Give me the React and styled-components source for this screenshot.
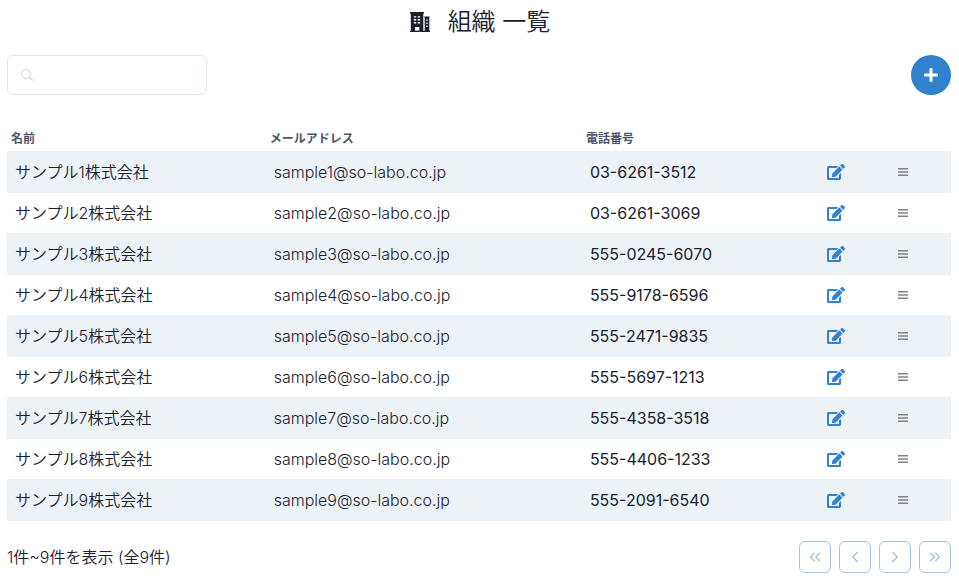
import React, { useState } from "react";
import styled, { createGlobalStyle } from "styled-components";
import { FaEdit, FaPlus } from "react-icons/fa";
import {
  FiChevronLeft,
  FiChevronRight,
  FiChevronsLeft,
  FiChevronsRight
} from "react-icons/fi";

const GlobalStyle = createGlobalStyle`
  *, *::before, *::after {
    box-sizing: border-box;
  }
  body {
    margin: 0;
    background: #fff;
    color: #1a202c;
    font-family: Inter, "Noto Sans CJK JP", sans-serif;
    font-size: 16px;
    font-weight: 350;
    line-height: 24px;
  }
  button, input {
    font: inherit;
    color: inherit;
  }
  svg {
    display: block;
  }
`;

const Page = styled.main`
  padding: 4px 8px 11px 7px;
`;

const Title = styled.h1`
  display: flex;
  align-items: center;
  justify-content: center;
  gap: 18px;
  margin: 0;
  padding-left: 2px;
  font-size: 24px;
  font-weight: 350;
  line-height: 35px;
`;

const Toolbar = styled.div`
  display: flex;
  align-items: center;
  justify-content: space-between;
  margin-top: 16px;
`;

const SearchBox = styled.label`
  display: flex;
  align-items: center;
  gap: 8px;
  width: 200px;
  height: 40px;
  padding: 0 12px;
  border: 1px solid #e2e8f0;
  border-radius: 6px;
  color: #cbd5e0;
`;

const SearchInput = styled.input`
  flex: 1;
  min-width: 0;
  padding: 0;
  border: 0;
  outline: 0;
  background: none;
  color: #1a202c;
`;

const AddButton = styled.button`
  display: flex;
  align-items: center;
  justify-content: center;
  width: 40px;
  height: 40px;
  padding: 0;
  border: 0;
  border-radius: 50%;
  background: #3182ce;
  color: #fff;
  cursor: pointer;
`;

const Table = styled.table`
  width: 100%;
  margin-top: 32px;
  border-collapse: separate;
  border-spacing: 0;
  table-layout: fixed;
`;

const HeadCell = styled.th`
  width: ${props => props.$width};
  height: 25px;
  padding: 4px;
  border-bottom: 1px solid #edf2f7;
  color: #4a5568;
  font-size: 12px;
  font-weight: 700;
  line-height: 16px;
  text-align: left;
`;

const Row = styled.tr`
  &:nth-child(odd) {
    background: #edf2f7;
  }
`;

const Cell = styled.td`
  padding: 8px;
  border-bottom: 1px solid #edf2f7;
  white-space: nowrap;
`;

const TelCell = styled(Cell)`
  font-weight: 400;
`;

const IconButton = styled.button`
  display: flex;
  align-items: center;
  height: 24px;
  padding: 0;
  border: 0;
  background: none;
  color: ${props => props.$color};
  cursor: pointer;
`;

const Footer = styled.footer`
  display: flex;
  align-items: center;
  justify-content: space-between;
  margin-top: 20px;
`;

const Pager = styled.nav`
  display: flex;
  gap: 8px;
`;

const PageButton = styled.button`
  display: flex;
  align-items: center;
  justify-content: center;
  width: 32px;
  height: 32px;
  padding: 0;
  border: 1px solid #3182ce;
  border-radius: 6px;
  background: none;
  color: #2b6cb0;
  &:disabled {
    border-color: #a9c4e0;
    color: #a9c4e0;
  }
`;

const BuildingIcon = () => (
  <svg width="20" height="20" viewBox="0 0 20 20" aria-hidden="true">
    <path
      fill="currentColor"
      fillRule="evenodd"
      d="M0 0h14v1.4h-.7V18.7h1.4V5.4h-.3V4.6h5.2v.8h-.3V18.7h.7V20H9.3v-5H5v5H0v-1.3h.8V1.4H0zM3.8 4.2v1.4h2.4V4.2zM7.7 4.2v1.4h2.4V4.2zM3.8 7.1v1.4h2.4V7.1zM7.7 7.1v1.4h2.4V7.1zM3.8 10v1.4h2.4V10zM7.7 10v1.4h2.4V10zM16.3 7.6v1.4h1.3V7.6zM16.3 10.6v1.4h1.3v-1.4zM16.3 13.6v1.4h1.3v-1.4z"
    />
    <path fill="currentColor" d="M5 18.6h4.5V20H5z" />
  </svg>
);

const SearchIcon = () => (
  <svg
    width="14"
    height="14"
    viewBox="0 0 14 14"
    fill="none"
    stroke="currentColor"
    aria-hidden="true"
  >
    <circle cx="6" cy="6" r="4.5" />
    <path d="M9.3 9.3l3.4 3.2" strokeWidth="1.4" />
  </svg>
);

const MenuIcon = () => (
  <svg width="10" height="10" viewBox="0 0 10 10" aria-hidden="true">
    <path
      fill="currentColor"
      d="M0 1h10v1.6H0zM0 4.2h10v1.6H0zM0 7.4h10V9H0z"
    />
  </svg>
);

const organizations = [
  "03-6261-3512",
  "03-6261-3069",
  "555-0245-6070",
  "555-9178-6596",
  "555-2471-9835",
  "555-5697-1213",
  "555-4358-3518",
  "555-4406-1233",
  "555-2091-6540"
].map((tel, i) => ({
  id: i + 1,
  name: `サンプル${i + 1}株式会社`,
  email: `sample${i + 1}@so-labo.co.jp`,
  tel
}));

const OrganizationRow = ({ organization }) => (
  <Row>
    <Cell>{organization.name}</Cell>
    <Cell>{organization.email}</Cell>
    <TelCell>{organization.tel}</TelCell>
    <Cell>
      <IconButton $color="#3182ce" aria-label="編集">
        <FaEdit size={18} />
      </IconButton>
    </Cell>
    <Cell>
      <IconButton $color="#7d828c" aria-label="メニュー">
        <MenuIcon />
      </IconButton>
    </Cell>
  </Row>
);

const App = () => {
  const [keyword, setKeyword] = useState("");
  const rows = organizations.filter(
    o => o.name.includes(keyword) || o.email.includes(keyword)
  );

  return (
    <>
      <GlobalStyle />
      <Page>
        <Title>
          <BuildingIcon />
          組織 一覧
        </Title>
        <Toolbar>
          <SearchBox>
            <SearchIcon />
            <SearchInput
              type="text"
              aria-label="検索"
              value={keyword}
              onChange={e => setKeyword(e.target.value)}
            />
          </SearchBox>
          <AddButton aria-label="追加">
            <FaPlus size={16} />
          </AddButton>
        </Toolbar>
        <Table>
          <thead>
            <tr>
              <HeadCell $width="27.4%">名前</HeadCell>
              <HeadCell $width="33.5%">メールアドレス</HeadCell>
              <HeadCell $width="25.1%">電話番号</HeadCell>
              <HeadCell $width="7.5%" />
              <HeadCell $width="6.5%" />
            </tr>
          </thead>
          <tbody>
            {rows.map(o => (
              <OrganizationRow key={o.id} organization={o} />
            ))}
          </tbody>
        </Table>
        <Footer>
          <span>
            1件~{rows.length}件を表示 (全{rows.length}件)
          </span>
          <Pager aria-label="ページ">
            <PageButton disabled aria-label="最初のページ">
              <FiChevronsLeft size={18} />
            </PageButton>
            <PageButton disabled aria-label="前のページ">
              <FiChevronLeft size={18} />
            </PageButton>
            <PageButton disabled aria-label="次のページ">
              <FiChevronRight size={18} />
            </PageButton>
            <PageButton disabled aria-label="最後のページ">
              <FiChevronsRight size={18} />
            </PageButton>
          </Pager>
        </Footer>
      </Page>
    </>
  );
};

export default App;
